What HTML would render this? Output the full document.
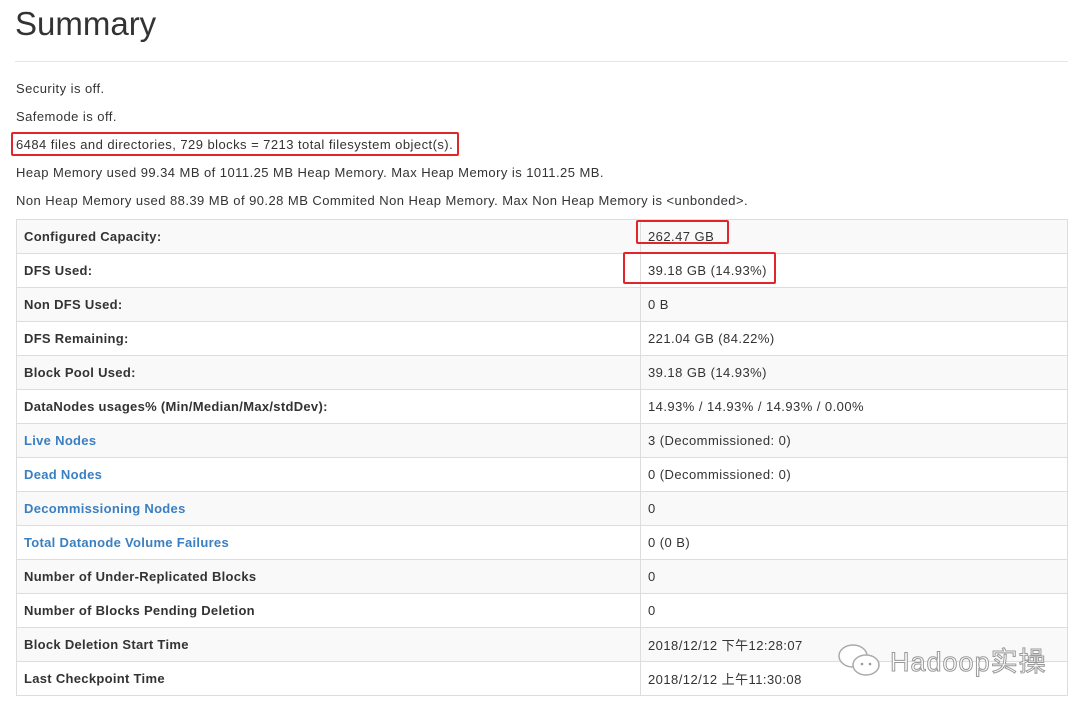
<!DOCTYPE html>
<html><head><meta charset="utf-8"><style>
body{margin:0;background:#fff;font-family:"Liberation Sans","Noto Sans CJK SC",sans-serif;color:#333;font-size:13px;width:1080px;height:711px;overflow:hidden;position:relative;letter-spacing:.45px}
h1{position:absolute;left:15px;top:5px;margin:0;font-size:33px;font-weight:normal;color:#333;letter-spacing:0}
.hr{position:absolute;left:15px;top:61px;width:1053px;border-top:1px solid #e6e6e6}
.p{position:absolute;left:16px;font-size:13px}
table{position:absolute;left:16px;top:219px;width:1052px;border-collapse:collapse;border:1px solid #ddd}
td{height:33px;border-top:1px solid #ddd;padding:0 0 0 7px;font-size:13px;vertical-align:middle}
td:first-child{width:616px;font-weight:bold;border-right:1px solid #ddd;letter-spacing:.3px}
tr:nth-child(odd){background:#f9f9f9}
a{color:#3a7fc1;text-decoration:none}
.r{position:absolute;border:2px solid #e0262a;border-radius:2px}
.wm{position:absolute;left:838px;top:640px;font-size:27px;color:#fff;-webkit-text-stroke:1px #999;letter-spacing:1px}
</style></head><body>
<h1>Summary</h1>
<div class="hr"></div>
<div class="p" style="top:81px">Security is off.</div>
<div class="p" style="top:109px">Safemode is off.</div>
<div class="p" style="top:137px">6484 files and directories, 729 blocks = 7213 total filesystem object(s).</div>
<div class="p" style="top:165px">Heap Memory used 99.34 MB of 1011.25 MB Heap Memory. Max Heap Memory is 1011.25 MB.</div>
<div class="p" style="top:193px">Non Heap Memory used 88.39 MB of 90.28 MB Commited Non Heap Memory. Max Non Heap Memory is &lt;unbonded&gt;.</div>
<table>
<tr><td>Configured Capacity:</td><td>262.47 GB</td></tr>
<tr><td>DFS Used:</td><td>39.18 GB (14.93%)</td></tr>
<tr><td>Non DFS Used:</td><td>0 B</td></tr>
<tr><td>DFS Remaining:</td><td>221.04 GB (84.22%)</td></tr>
<tr><td>Block Pool Used:</td><td>39.18 GB (14.93%)</td></tr>
<tr><td>DataNodes usages% (Min/Median/Max/stdDev):</td><td>14.93% / 14.93% / 14.93% / 0.00%</td></tr>
<tr><td><a>Live Nodes</a></td><td>3 (Decommissioned: 0)</td></tr>
<tr><td><a>Dead Nodes</a></td><td>0 (Decommissioned: 0)</td></tr>
<tr><td><a>Decommissioning Nodes</a></td><td>0</td></tr>
<tr><td><a>Total Datanode Volume Failures</a></td><td>0 (0 B)</td></tr>
<tr><td>Number of Under-Replicated Blocks</td><td>0</td></tr>
<tr><td>Number of Blocks Pending Deletion</td><td>0</td></tr>
<tr><td>Block Deletion Start Time</td><td>2018/12/12 下午12:28:07</td></tr>
<tr><td>Last Checkpoint Time</td><td>2018/12/12 上午11:30:08</td></tr>
</table>
<div class="r" style="left:11px;top:132px;width:444px;height:20px"></div>
<div class="r" style="left:636px;top:220px;width:89px;height:20px"></div>
<div class="r" style="left:623px;top:252px;width:149px;height:28px"></div>
<svg style="position:absolute;left:836px;top:642px" width="50" height="40"><ellipse cx="17" cy="14" rx="14" ry="11" fill="#fff" stroke="#aaa" stroke-width="1.5"/><ellipse cx="30" cy="23" rx="13" ry="10" fill="#fff" stroke="#aaa" stroke-width="1.5"/><circle cx="26" cy="22" r="1.3" fill="#999"/><circle cx="34" cy="22" r="1.3" fill="#999"/></svg>
<div class="wm" style="left:890px">Hadoop实操</div>
</body></html>
